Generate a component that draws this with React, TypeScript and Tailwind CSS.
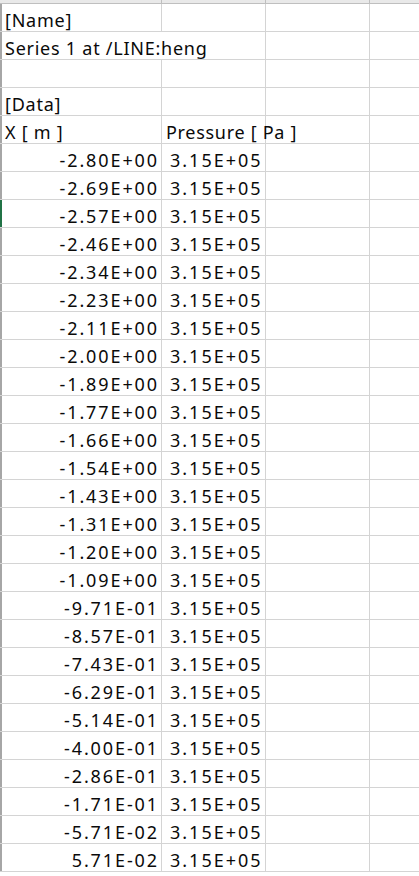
import React from "react";

const xs = [
  "-2.80E+00", "-2.69E+00", "-2.57E+00", "-2.46E+00", "-2.34E+00", "-2.23E+00",
  "-2.11E+00", "-2.00E+00", "-1.89E+00", "-1.77E+00", "-1.66E+00", "-1.54E+00",
  "-1.43E+00", "-1.31E+00", "-1.20E+00", "-1.09E+00", "-9.71E-01", "-8.57E-01",
  "-7.43E-01", "-6.29E-01", "-5.14E-01", "-4.00E-01", "-2.86E-01", "-1.71E-01",
  "-5.71E-02", "5.71E-02",
];

type Row = { a?: string; b?: string; num?: boolean; spill?: boolean; mark?: boolean };

const rows: Row[] = [
  { a: "[Name]" },
  { a: "Series 1 at /LINE:heng", spill: true },
  {},
  { a: "[Data]" },
  { a: "X [ m ]", b: "Pressure [ Pa ]" },
  ...xs.map((x, i) => ({ a: x, b: "3.15E+05", num: true, mark: i === 2 })),
];

const cell = "h-[27px] flex items-end text-[18px] leading-[22px] text-[#0a0a0a] whitespace-nowrap";

const App: React.FC = () => {
  return (
    <div className="w-[419px] h-[876px] overflow-hidden bg-white" style={{ fontFamily: '"Noto Sans", "Liberation Sans", sans-serif' }}>
      {/* header strip */}
      <div className="h-[4px] bg-[#e9e9e9] border-b border-[#bfbfbf] flex">
        <div className="w-[162px] border-r border-[#bfbfbf]" />
        <div className="w-[104px] border-r border-[#bfbfbf]" />
        <div className="w-[104px] border-r border-[#bfbfbf]" />
      </div>
      {rows.map((r, i) => (
        <div key={i} className="flex border-b border-[#d4d4d4]">
          <div className={`w-[2px] h-[27px] ${r.mark ? "bg-[#217346]" : "bg-[#a6a6a6]"}`} />
          <div
            className={`w-[160px] ${cell} ${r.spill ? "overflow-visible" : "border-r border-[#d4d4d4] overflow-hidden"} ${
              r.num ? "justify-end pr-[2px] tracking-[1.9px]" : "pl-[3px] tracking-[0.75px]"
            }`}
          >
            <span>{r.a}</span>
          </div>
          <div
            className={`w-[104px] ${cell} border-r border-[#d4d4d4] ${
              r.num ? "pl-[8px] tracking-[2px]" : "pl-[4px] tracking-[0.7px]"
            }`}
          >
            <span>{r.b}</span>
          </div>
          <div className="w-[104px] h-[27px] border-r border-[#d4d4d4]" />
          <div className="flex-1 h-[27px]" />
        </div>
      ))}
    </div>
  );
};

export default App;
